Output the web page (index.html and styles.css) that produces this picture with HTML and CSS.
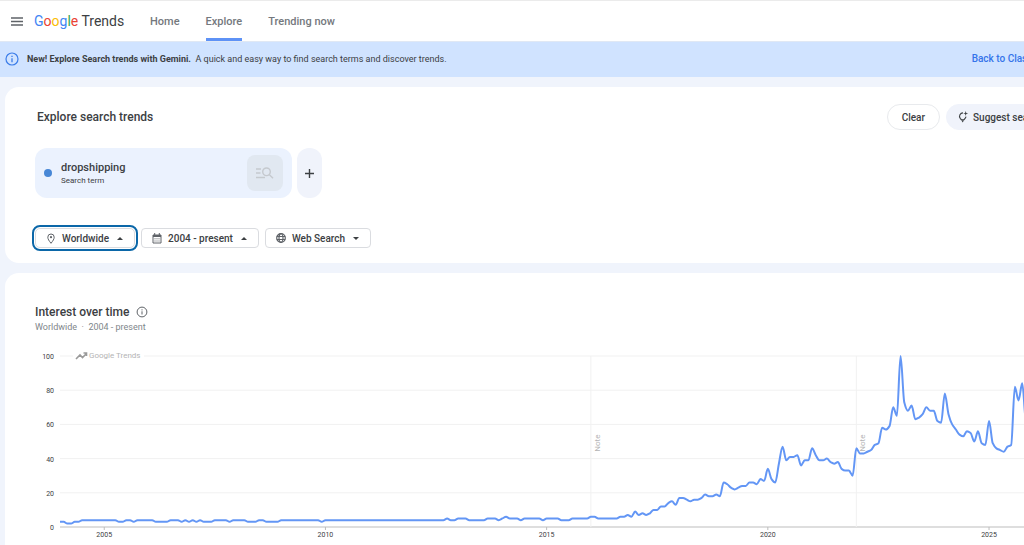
FILE: index.html
```
<!DOCTYPE html>
<html lang="en">

<head>
    <meta charset="UTF-8">
    <title>Explore - Google Trends</title>
    <link rel="stylesheet" href="styles.css">
</head>

<body>
    <header class="topbar">
        <button class="menu_btn" aria-label="Main menu">
            <svg width="12" height="9" viewBox="0 0 12 9"><path d="M0 1h12M0 4.5h12M0 8h12" stroke="#5f6368" stroke-width="1.5" /></svg>
        </button>
        <a class="logo" href="#"><span class="blue">G</span><span class="red">o</span><span class="yellow">o</span><span class="blue">g</span><span class="green">l</span><span class="red">e</span> Trends</a>
        <nav>
            <a href="#">Home</a>
            <a href="#" class="valgt">Explore</a>
            <a href="#">Trending now</a>
        </nav>
    </header>

    <section class="banner">
        <svg width="14" height="14" viewBox="0 0 14 14"><circle cx="7" cy="7" r="6" fill="none" stroke="#3b7de9" stroke-width="1.2" /><path d="M7 6.2v4M7 3.7v1.3" stroke="#3b7de9" stroke-width="1.3" /></svg>
        <p><strong>New! Explore Search trends with Gemini.</strong>&nbsp; <span>A quick and easy way to find search terms and discover trends.</span></p>
        <a href="#">Back to Classic Explore</a>
    </section>

    <main>
        <section class="card search">
            <div class="search_top">
                <h1>Explore search trends</h1>
                <button class="pill">Clear</button>
                <button class="pill suggest">
                    <svg width="12" height="12" viewBox="0 0 12 12" fill="none" stroke="#3c4043"><path d="M6 1.9A3.4 3.4 0 0 0 3.2 7.3L4.3 8.7H7L8.1 7.3A3.4 3.4 0 0 0 9 5.6" stroke-width="1.1" /><path d="M4.3 9.2H7L5.7 11.4z" fill="#3c4043" stroke="none" /><path d="M8.7 0L9.3 1.9L11.2 2.5L9.3 3.1L8.7 5L8.1 3.1L6.2 2.5L8.1 1.9z" fill="#3c4043" stroke="none" /></svg>
                    Suggest search terms
                </button>
            </div>

            <div class="terms">
                <div class="term">
                    <span class="dot"></span>
                    <div class="term_text">
                        <h2>dropshipping</h2>
                        <p>Search term</p>
                    </div>
                    <button class="term_btn" aria-label="Change search term">
                        <svg width="18" height="12" viewBox="0 0 18 12" fill="none" stroke="#c5c9ce" stroke-width="1.4"><path d="M0 2h5M0 6h4.5M0 10.5h9" /><circle cx="10.5" cy="4.8" r="3.8" /><path d="M13.2 7.5L17 11.2" /></svg>
                    </button>
                </div>
                <button class="add" aria-label="Add term">
                    <svg width="9" height="9" viewBox="0 0 9 9"><path d="M4.5 0v9M0 4.5h9" stroke="#3c4043" stroke-width="1.4" /></svg>
                </button>
            </div>

            <div class="filters">
                <button class="filter valgt">
                    <svg width="10" height="11" viewBox="0 0 10 11" fill="none" stroke="#5f6368"><path d="M5 10.3C3 7.8 1.8 6 1.8 4.2a3.2 3.2 0 0 1 6.4 0C8.2 6 7 7.8 5 10.3z" /><circle cx="5" cy="4.2" r="1.1" fill="#5f6368" stroke="none" /></svg>
                    <span>Worldwide</span>
                    <svg width="6" height="3" viewBox="0 0 6 3"><path d="M0 3L3 0l3 3z" fill="#3c4043" /></svg>
                </button>
                <button class="filter">
                    <svg width="10" height="11" viewBox="0 0 10 11" fill="none" stroke="#5f6368"><path d="M1 2h8v8H1z" /><path d="M1 3h8" stroke-width="2" /><path d="M2.7 0v2M7.3 0v2" /><path d="M2.5 5.8h5M2.5 8h5" stroke-dasharray="1 1" /></svg>
                    <span>2004 - present</span>
                    <svg width="6" height="3" viewBox="0 0 6 3"><path d="M0 3L3 0l3 3z" fill="#3c4043" /></svg>
                </button>
                <button class="filter">
                    <svg width="10" height="10" viewBox="0 0 10 10" fill="none" stroke="#5f6368" stroke-width="1.2"><circle cx="5" cy="5" r="4.3" /><ellipse cx="5" cy="5" rx="2" ry="4.3" /><path d="M.8 3.5h8.4M.8 6.5h8.4" /></svg>
                    <span>Web Search</span>
                    <svg width="6" height="3" viewBox="0 0 6 3"><path d="M0 0l3 3 3-3z" fill="#3c4043" /></svg>
                </button>
            </div>
        </section>

        <section class="card interest">
            <div class="interest_top">
                <h2>Interest over time</h2>
                <svg width="12" height="12" viewBox="0 0 12 12"><circle cx="6" cy="6" r="4.9" fill="none" stroke="#5f6368" /><path d="M6 5.3v3.2M6 3.3v1.1" stroke="#5f6368" /></svg>
            </div>
            <p class="sub">Worldwide &nbsp;·&nbsp; 2004 - present</p>
            <svg id="chart" class="chart"></svg>
        </section>
    </main>

    <script src="chart.js"></script>
</body>

</html>
```
FILE: styles.css
```
* {
    box-sizing: border-box;
}

html {
    overflow: hidden;
}

body {
    margin: 0;
    min-width: 1112px;
    background-color: #f0f4fc;
    color: #3c4043;
    font-family: Roboto, sans-serif;
    font-size: 10px;
}

h1,
h2,
p {
    margin: 0;
}

h1,
h2 {
    font-weight: 500;
}

a {
    text-decoration: none;
}

button {
    border: none;
    padding: 0;
    background: none;
    color: #3c4043;
    font-family: inherit;
    font-size: 10px;
    font-weight: 500;
    white-space: nowrap;
}

svg {
    display: block;
    flex: none;
}

.topbar {
    display: flex;
    align-items: center;
    height: 41px;
    padding-left: 11px;
    background-color: white;
    border-top: 1px solid #ebebeb;
}

.logo {
    margin-left: 11px;
    width: 91px;
    color: #3c4043;
    font-size: 14px;
    white-space: nowrap;
}

.blue {
    color: #4285f4;
}

.red {
    color: #ea4335;
}

.yellow {
    color: #fbbc04;
}

.green {
    color: #34a853;
}

nav {
    display: flex;
    align-self: stretch;
    gap: 26px;
    margin-left: 25px;
}

nav a {
    display: flex;
    align-items: center;
    color: #74787d;
    font-size: 11px;
    font-weight: 500;
}

nav .valgt {
    background: linear-gradient(#5e92f6, #5e92f6) bottom / 100% 3px no-repeat;
}

/* banner */
.banner {
    display: flex;
    align-items: center;
    height: 36px;
    padding: 0 36px 2px 5px;
    background-color: #d0e3ff;
    border-top: 1px solid #e0e8f4;
    font-size: 9px;
}

.banner p {
    flex: 1;
    margin-left: 8px;
}

.banner a {
    color: #3574ea;
    font-size: 10px;
    font-weight: 500;
}

/* cards */
main {
    display: grid;
    gap: 10px;
    padding: 10px 0 0 5px;
}

.card {
    background-color: white;
    border-radius: 14px;
    padding-left: 30px;
}

.search {
    padding-top: 17px;
    padding-bottom: 15px;
}

.search_top {
    display: flex;
    align-items: center;
    gap: 6px;
}

.search_top h1 {
    flex: 1;
    margin-left: 2px;
    font-size: 12px;
}

.pill {
    height: 26px;
    padding: 0 14px;
    border: 1px solid #e8eaed;
    border-radius: 13px;
    font-size: 10px;
}

.suggest {
    display: flex;
    align-items: center;
    gap: 4px;
    padding: 0 40px 0 10px;
    background-color: #f0f3fb;
    border-color: #f0f3fb;
}

.terms {
    display: flex;
    gap: 5px;
    height: 50px;
    margin-top: 18px;
}

.term {
    display: flex;
    align-items: center;
    width: 257px;
    padding: 0 9px;
    border-radius: 12px;
    background-color: #ebf2fe;
}

.dot {
    width: 8px;
    height: 8px;
    border-radius: 50%;
    background-color: #4787d6;
}

.term_text {
    flex: 1;
    margin-left: 9px;
}

.term_text h2 {
    font-size: 11px;
    line-height: 14px;
}

.term_text p {
    font-size: 8px;
    line-height: 11px;
}

.term_btn {
    display: flex;
    align-items: center;
    justify-content: center;
    width: 36px;
    height: 36px;
    border-radius: 8px;
    background-color: #e1e8f1;
}

.add {
    display: flex;
    align-items: center;
    justify-content: center;
    width: 25px;
    border-radius: 12px;
    background-color: #f0f3fb;
}

.filters {
    display: flex;
    gap: 6px;
    margin-top: 30px;
}

.filter {
    display: flex;
    align-items: center;
    height: 20px;
    padding: 0 11px 0 10px;
    border: 1px solid #dadce0;
    border-radius: 4px;
    font-size: 10px;
}

.filter span {
    margin: 0 8px 0 6px;
}

.filter.valgt {
    border-radius: 5px;
    outline: 2px solid #0b67a8;
    outline-offset: 1px;
}

/* interest over time */
.interest {
    min-height: 290px;
    padding-top: 31px;
    border-radius: 14px 14px 0 0;
}

.interest_top {
    display: flex;
    align-items: center;
    gap: 7px;
}

.interest_top h2 {
    font-size: 12px;
    line-height: 16px;
}

.sub {
    color: #80868b;
    font-size: 9px;
    line-height: 14px;
}

.chart {
    width: 100%;
    height: 200px;
    margin-top: 10px;
}

.chart .label {
    fill: #3c4043;
    font-size: 7px;
}

.chart .grid {
    stroke: #f1f1f1;
}

.chart .axis {
    stroke: #bdbdbd;
}

.chart .mark {
    fill: #b4b4b4;
    font-size: 8px;
}

.chart .line {
    fill: none;
    stroke: #6396f5;
    stroke-width: 2;
    stroke-linejoin: round;
}
```
FILE: chart.js
```
// search interest, one row per year from 2004, one value per month
const years = [
    [3, 3, 2, 2, 3, 3, 4, 4, 4, 4, 4, 4],
    [4, 4, 4, 4, 3, 3, 4, 4, 3, 4, 4, 4],
    [4, 4, 3, 3, 3, 3, 4, 4, 4, 3, 4, 3],
    [4, 3, 4, 3, 3, 3, 4, 4, 4, 4, 3, 4],
    [4, 4, 4, 3, 3, 3, 4, 4, 3, 3, 3, 3],
    [4, 4, 4, 4, 4, 4, 4, 4, 4, 4, 4, 3],
    [4, 4, 4, 4, 4, 4, 4, 4, 4, 4, 4, 4],
    [4, 4, 4, 4, 4, 4, 4, 4, 4, 4, 4, 4],
    [4, 4, 4, 4, 4, 4, 4, 4, 4, 5, 4, 4],
    [5, 5, 5, 4, 4, 4, 4, 4, 5, 5, 5, 4],
    [5, 6, 5, 5, 5, 4, 5, 5, 5, 5, 5, 4],
    [5, 5, 5, 5, 4, 4, 4, 5, 5, 5, 5, 5],
    [6, 6, 5, 5, 5, 5, 5, 5, 6, 6, 7, 6],
    [9, 7, 8, 7, 8, 10, 10, 12, 12, 14, 15, 13],
    [17, 17, 16, 15, 16, 16, 17, 19, 18, 18, 19, 18],
    [26, 25, 23, 22, 23, 24, 24, 26, 26, 25, 28, 27],
    [34, 28, 26, 37, 47, 39, 41, 41, 42, 36, 39, 39],
    [46, 42, 39, 39, 40, 38, 37, 38, 34, 33, 33, 30],
    [46, 43, 43, 44, 45, 48, 49, 58, 57, 59, 70, 65],
    [100, 73, 68, 71, 63, 64, 66, 70, 68, 68, 62, 61],
    [78, 66, 60, 57, 54, 53, 56, 55, 50, 56, 49, 48],
    [62, 49, 46, 45, 44, 47, 48, 82, 74, 84, 62, 60]
];

const left = 25;
const top0 = 12;
const plotHeight = 171;
const yearWidth = 44.24;

const x = month => left + month * yearWidth / 12;
const y = value => top0 + plotHeight * (1 - value / 100);

function linePath(values) {
    // flat tangent on peaks and valleys, so the curve never overshoots
    const slope = values.map((v, i) => {
        const a = v - values[i - 1];
        const b = values[i + 1] - v;
        return a * b > 0 ? 2 * a * b / (a + b) : 0;
    });
    let d = `M${x(0)} ${y(values[0])}`;
    for (let i = 1; i < values.length; i++) {
        d += `C${x(i - 2 / 3)} ${y(values[i - 1] + slope[i - 1] / 3)} ${x(i - 1 / 3)} ${y(values[i] - slope[i] / 3)} ${x(i)} ${y(values[i])}`;
    }
    return d;
}

let svg = "";

[100, 80, 60, 40, 20, 0].forEach(v => {
    svg += `<line class="${v ? "grid" : "axis"}" x1="${left}" x2="100%" y1="${y(v)}" y2="${y(v)}" />`;
    svg += `<text class="label" x="19" y="${y(v) + 3}" text-anchor="end">${v}</text>`;
});

[2005, 2010, 2015, 2020, 2025].forEach(year => {
    const px = x((year - 2004) * 12);
    svg += `<line class="axis" x1="${px}" x2="${px}" y1="${y(0)}" y2="${y(0) + 3}" />`;
    svg += `<text class="label" x="${px}" y="${y(0) + 10}" text-anchor="middle">${year}</text>`;
});

[2016, 2022].forEach(year => {
    const px = x((year - 2004) * 12);
    svg += `<line class="grid" x1="${px}" x2="${px}" y1="${y(100)}" y2="${y(0)}" />`;
    svg += `<text class="mark" transform="translate(${px + 9} ${y(44)}) rotate(-90)">Note</text>`;
});

// watermark over the top grid line
svg += `<rect x="38" y="4" width="71" height="16" fill="white" />`;
svg += `<path d="M41 15l4-4 2.5 2.5L51 10M48.5 9h3v3" fill="none" stroke="#9a9a9a" stroke-width="1.6" />`;
svg += `<text class="mark" x="54" y="14">Google Trends</text>`;

svg += `<path class="line" d="${linePath(years.flat())}" />`;

document.querySelector("#chart").innerHTML = svg;
```
